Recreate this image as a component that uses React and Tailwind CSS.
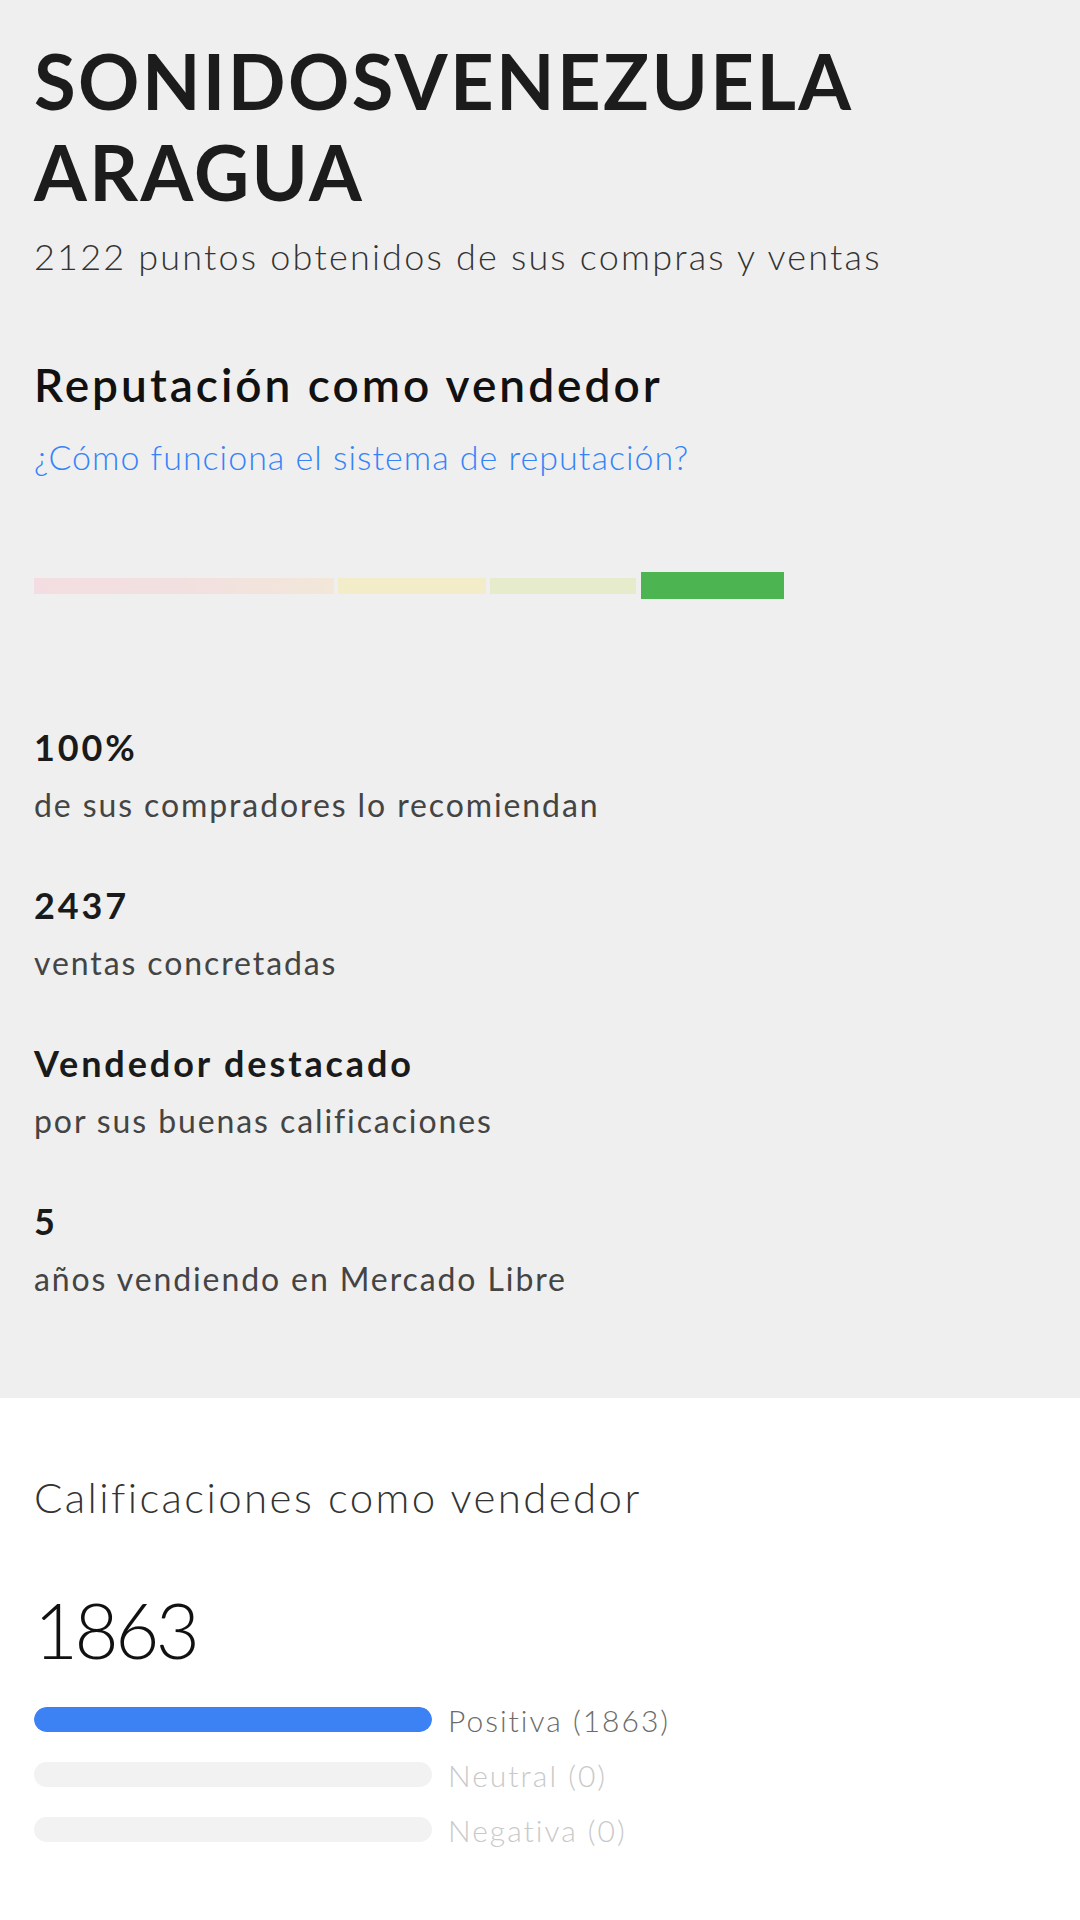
import React from 'react';

const stats = [
  { value: '100%', label: 'de sus compradores lo recomiendan' },
  { value: '2437', label: 'ventas concretadas' },
  { value: 'Vendedor destacado', label: 'por sus buenas calificaciones' },
  { value: '5', label: 'años vendiendo en Mercado Libre' },
];

const ratings = [
  { label: 'Positiva (1863)', fill: 100, text: 'text-[#6b6b6b]' },
  { label: 'Neutral (0)', fill: 0, text: 'text-[#c9c9c9]' },
  { label: 'Negativa (0)', fill: 0, text: 'text-[#c9c9c9]' },
];

const ReputationThermometer = () => (
  <div className="flex items-center h-[27px]">
    <div className="w-[300px] h-[16px] bg-gradient-to-r from-[#f3dde2] via-[#f2e0e0] to-[#f2e7d9]" />
    <div className="ml-[4px] w-[148px] h-[16px] bg-[#f3ecc9]" />
    <div className="ml-[4px] w-[146px] h-[16px] bg-[#e6ebcc]" />
    <div className="ml-[5px] w-[143px] h-[27px] bg-[#4cb552]" />
  </div>
);

const App = () => {
  return (
    <div className="w-[1080px] min-h-[1920px] bg-white font-['Lato',sans-serif]">
      <section className="bg-[#efefef] px-[34px] pt-[35px] pb-[97px]">
        <h1 className="text-[76px] leading-[91px] font-bold text-[#1c1c1c] tracking-[2.4px]">
          SONIDOSVENEZUELA
          <br />
          ARAGUA
        </h1>
        <p className="mt-[15px] text-[36px] leading-[48px] font-light text-[#333333] tracking-[2.2px]">
          2122 puntos obtenidos de sus compras y ventas
        </p>

        <h2 className="mt-[77px] text-[46px] leading-[56px] font-semibold text-[#111111] tracking-[3px]">
          Reputación como vendedor
        </h2>
        <a className="block mt-[22px] text-[34px] leading-[44px] font-light text-[#3483fa] tracking-[1px]">
          ¿Cómo funciona el sistema de reputación?
        </a>

        <div className="mt-[93px]">
          <ReputationThermometer />
        </div>

        <div className="mt-[126px] flex flex-col gap-[56px]">
          {stats.map((s) => (
            <div key={s.value}>
              <p className="text-[36px] leading-[44px] font-bold text-[#1a1a1a] tracking-[2.9px]">{s.value}</p>
              <p className="mt-[14px] text-[32px] leading-[44px] text-[#444444] tracking-[1.9px]">{s.label}</p>
            </div>
          ))}
        </div>
      </section>

      <section className="px-[34px] pt-[73px] pb-[60px]">
        <h3 className="text-[42px] leading-[52px] font-light text-[#333333] tracking-[2.4px]">
          Calificaciones como vendedor
        </h3>
        <p className="mt-[65px] text-[76px] leading-[84px] font-light text-[#111111] tracking-[-3.5px]">1863</p>

        <div className="mt-[35px] flex flex-col gap-[30px]">
          {ratings.map((r) => (
            <div key={r.label} className="flex items-center h-[25px]">
              <div className="w-[398px] h-[25px] rounded-full bg-[#f2f2f2] overflow-hidden">
                <div
                  className="h-full rounded-full bg-[#3c82f4]"
                  style={{ width: `${r.fill}%` }}
                />
              </div>
              <span className={`ml-[16px] text-[30px] leading-[36px] font-light tracking-[2px] ${r.text}`}>
                {r.label}
              </span>
            </div>
          ))}
        </div>
      </section>
    </div>
  );
};

export default App;
